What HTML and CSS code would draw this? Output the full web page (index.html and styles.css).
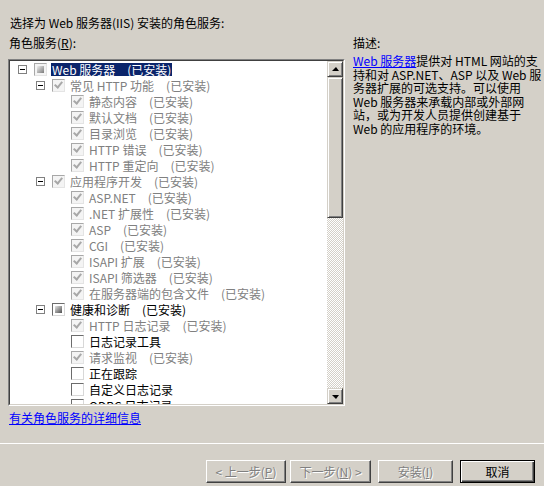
FILE: index.html
```html
<!DOCTYPE html>
<html lang="zh-CN">
<head>
<meta charset="utf-8">
<title>添加角色服务</title>
<link rel="stylesheet" href="styles.css">
</head>
<body>
<div class="dialog">
  <div class="intro">选择为 Web 服务器(IIS) 安装的角色服务:</div>
  <div class="main">
    <div class="left">
      <div class="label">角色服务(<u>R</u>):</div>
      <div class="listbox">
        <div class="listbox-inner">
          <div class="tree">
            <div class="row l1"><span class="exp"></span><span class="cb tri dis"></span><span class="txt sel">Web 服务器<span class="st">(已安装)</span></span></div>
            <div class="row l2 gray"><span class="exp"></span><span class="cb chk dis"></span><span class="txt">常见 HTTP 功能<span class="st">(已安装)</span></span></div>
            <div class="row l3 gray"><span class="cb chk dis"></span><span class="txt">静态内容<span class="st">(已安装)</span></span></div>
            <div class="row l3 gray"><span class="cb chk dis"></span><span class="txt">默认文档<span class="st">(已安装)</span></span></div>
            <div class="row l3 gray"><span class="cb chk dis"></span><span class="txt">目录浏览<span class="st">(已安装)</span></span></div>
            <div class="row l3 gray"><span class="cb chk dis"></span><span class="txt">HTTP 错误<span class="st">(已安装)</span></span></div>
            <div class="row l3 gray"><span class="cb chk dis"></span><span class="txt">HTTP 重定向<span class="st">(已安装)</span></span></div>
            <div class="row l2 gray"><span class="exp"></span><span class="cb chk dis"></span><span class="txt">应用程序开发<span class="st">(已安装)</span></span></div>
            <div class="row l3 gray"><span class="cb chk dis"></span><span class="txt">ASP.NET<span class="st">(已安装)</span></span></div>
            <div class="row l3 gray"><span class="cb chk dis"></span><span class="txt">.NET 扩展性<span class="st">(已安装)</span></span></div>
            <div class="row l3 gray"><span class="cb chk dis"></span><span class="txt">ASP<span class="st">(已安装)</span></span></div>
            <div class="row l3 gray"><span class="cb chk dis"></span><span class="txt">CGI<span class="st">(已安装)</span></span></div>
            <div class="row l3 gray"><span class="cb chk dis"></span><span class="txt">ISAPI 扩展<span class="st">(已安装)</span></span></div>
            <div class="row l3 gray"><span class="cb chk dis"></span><span class="txt">ISAPI 筛选器<span class="st">(已安装)</span></span></div>
            <div class="row l3 gray"><span class="cb chk dis"></span><span class="txt">在服务器端的包含文件<span class="st">(已安装)</span></span></div>
            <div class="row l2"><span class="exp"></span><span class="cb tri"></span><span class="txt">健康和诊断<span class="st">(已安装)</span></span></div>
            <div class="row l3 gray"><span class="cb chk dis"></span><span class="txt">HTTP 日志记录<span class="st">(已安装)</span></span></div>
            <div class="row l3"><span class="cb"></span><span class="txt">日志记录工具</span></div>
            <div class="row l3 gray"><span class="cb chk dis"></span><span class="txt">请求监视<span class="st">(已安装)</span></span></div>
            <div class="row l3"><span class="cb"></span><span class="txt">正在跟踪</span></div>
            <div class="row l3"><span class="cb"></span><span class="txt">自定义日志记录</span></div>
            <div class="row l3"><span class="cb"></span><span class="txt">ODBC 日志记录</span></div>
          </div>
          <div class="vscroll">
            <div class="sb-btn"><span class="arrow up"></span></div>
            <div class="thumb"></div>
            <div class="track"></div>
            <div class="sb-btn"><span class="arrow down"></span></div>
          </div>
        </div>
      </div>
      <div class="more"><a href="#" class="link">有关角色服务的详细信息</a></div>
    </div>
    <div class="right">
      <div class="label rlabel">描述:</div>
      <div class="desc">
        <div class="dline"><a href="#" class="link">Web 服务器</a>提供对 HTML 网站的支</div>
        <div class="dline">持和对 ASP.NET、ASP 以及 Web 服</div>
        <div class="dline">务器扩展的可选支持。可以使用</div>
        <div class="dline">Web 服务器来承载内部或外部网</div>
        <div class="dline">站，或为开发人员提供创建基于</div>
        <div class="dline">Web 的应用程序的环境。</div>
      </div>
    </div>
  </div>
  <div class="sep"></div>
  <div class="footer">
    <button class="btn disabled w80">&lt; 上一步(<u>P</u>)</button>
    <button class="btn disabled w81 gap4">下一步(<u>N</u>) &gt;</button>
    <button class="btn disabled gap7">安装(<u>I</u>)</button>
    <button class="btn default gap7">取消</button>
  </div>
</div>
</body>
</html>
```

FILE: styles.css
```css
* { box-sizing: border-box; }

html, body {
  margin: 0;
  background: #d4d0c8;
}

body {
  width: 544px;
  height: 486px;
  overflow: hidden;
  font: 12px/16px "Noto Sans CJK SC", "Noto Sans CJK JP", sans-serif;
  color: #000;
}

.intro {
  padding: 15px 0 0 10px;
  height: 35px;
  white-space: nowrap;
}

.main {
  display: flex;
  padding-left: 8px;
}

.left {
  width: 337px;
  flex: none;
}

.label {
  padding-left: 1px;
  height: 24px;
  white-space: nowrap;
}

.listbox {
  height: 347px;
  border: 1px solid;
  border-color: #808080 #ffffff #ffffff #808080;
  display: flex;
}

.listbox-inner {
  flex: 1;
  display: flex;
  border: 1px solid;
  border-color: #404040 #d4d0c8 #d4d0c8 #404040;
  background: #fff;
  min-width: 0;
}

.tree {
  flex: 1;
  overflow: hidden;
  min-width: 0;
}

.row {
  display: flex;
  align-items: center;
  height: 16px;
  white-space: nowrap;
}

.row.l1 { padding-left: 8px; }
.row.l2 { padding-left: 26px; }
.row.l3 { padding-left: 61px; }

.row.gray { color: #808080; }

.exp {
  flex: none;
  width: 9px;
  height: 9px;
  border: 1px solid #808080;
  background: #fff;
  margin-right: 7px;
  display: inline-flex;
  align-items: center;
  justify-content: center;
}

.exp::after {
  content: "";
  width: 5px;
  height: 1px;
  background: #000;
}

.cb {
  flex: none;
  width: 13px;
  height: 13px;
  margin-right: 4px;
  border: 1px solid;
  border-color: #6c6c6c #d8d8d8 #d8d8d8 #6c6c6c;
  background: #fff;
  display: inline-flex;
  align-items: center;
  justify-content: center;
}

.cb.dis {
  border-color: #a8a8a8 #e4e4e4 #e4e4e4 #a8a8a8;
  background: #f4f4f4;
}

.cb.chk::after {
  content: "";
  width: 3px;
  height: 6px;
  border: solid #a8a8a8;
  border-width: 0 2px 2px 0;
  transform: rotate(40deg);
  margin-top: -2px;
}

.cb.tri::after {
  content: "";
  width: 7px;
  height: 7px;
  background: linear-gradient(135deg, #e6e6e6 0%, #9a9a9a 50%, #505050 100%);
}

.cb.tri.dis::after {
  background: linear-gradient(135deg, #f0f0f0 0%, #b4b4b4 50%, #7a7a7a 100%);
}

.txt {
  padding: 0 1px;
  line-height: 13px;
  height: 13px;
}

.txt.sel {
  background: #0a246a;
  color: #fff;
}

.st {
  margin-left: 12px;
}

.vscroll {
  width: 16px;
  flex: none;
  display: flex;
  flex-direction: column;
}

.sb-btn {
  height: 16px;
  flex: none;
  background: #d4d0c8;
  border: 1px solid;
  border-color: #d4d0c8 #404040 #404040 #d4d0c8;
  box-shadow: inset 1px 1px 0 #fff, inset -1px -1px 0 #808080;
  display: flex;
  align-items: center;
  justify-content: center;
}

.arrow {
  width: 0;
  height: 0;
  border-left: 4px solid transparent;
  border-right: 3px solid transparent;
}

.arrow.up { border-bottom: 4px solid #000; margin-top: -1px; }
.arrow.down { border-top: 4px solid #000; margin-top: 1px; }

.thumb {
  height: 141px;
  flex: none;
  background: #d4d0c8;
  border: 1px solid;
  border-color: #d4d0c8 #404040 #404040 #d4d0c8;
  box-shadow: inset 1px 1px 0 #fff, inset -1px -1px 0 #808080;
}

.track {
  flex: 1;
  background: repeating-conic-gradient(#ffffff 0 25%, #d4d0c8 0 50%) 0 0 / 2px 2px;
}

.more {
  margin-top: 4px;
  padding-left: 1px;
  height: 16px;
}

.link {
  color: #0000ff;
  text-decoration: underline;
}

.right {
  margin-left: 8px;
  flex: 1;
}

.rlabel {
  height: 19px;
  padding-left: 0;
}

.desc {
  white-space: nowrap;
}

.dline {
  height: 13.6px;
  line-height: 13.6px;
}

.sep {
  margin-top: 17px;
  height: 1px;
  background: #ffffff;
}

.footer {
  display: flex;
  justify-content: flex-end;
  padding: 16px 9px 0 0;
}

.btn {
  width: 75px;
  height: 23px;
  padding: 0;
  margin: 0;
  font: 12px/16px "Noto Sans CJK SC", "Noto Sans CJK JP", sans-serif;
  color: #000;
  background: #d4d0c8;
  border: 1px solid;
  border-color: #ffffff #404040 #404040 #ffffff;
  box-shadow: inset -1px -1px 0 #808080;
  white-space: nowrap;
}

.btn.w80 { width: 80px; }
.btn.w81 { width: 81px; }
.btn.gap4 { margin-left: 4px; }
.btn.gap7 { margin-left: 7px; }

.btn.disabled {
  color: #808080;
  text-shadow: 1px 1px 0 #ffffff;
}

.btn.default {
  border-color: #000;
  box-shadow: inset 1px 1px 0 #ffffff, inset -1px -1px 0 #404040, inset -2px -2px 0 #808080;
}
```
